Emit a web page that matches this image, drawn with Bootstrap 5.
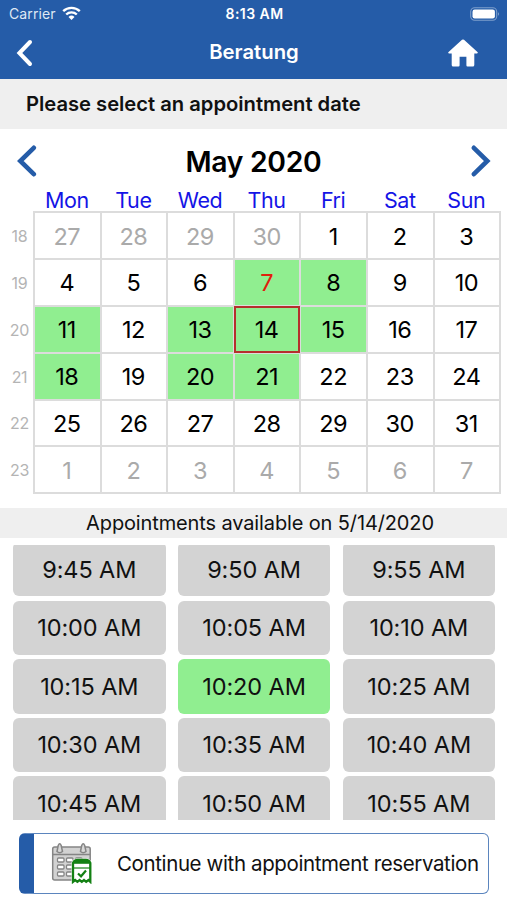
<!DOCTYPE html>
<html lang="en">
<head>
<meta charset="utf-8">
<meta name="viewport" content="width=device-width, initial-scale=1">
<title>Beratung</title>
<link rel="stylesheet" href="https://cdn.jsdelivr.net/npm/bootstrap@5.3.0/dist/css/bootstrap.min.css">
<style>
  :root { --brand: #255ca8; --free: #90ee90; --line: #dcdcdc; }
  body { font-family: Inter, "Liberation Sans", sans-serif; color: #111; background: #fff; width: 507px; height: 900px; overflow: hidden; }
  button { color: inherit; }
  .app-top { background: var(--brand); height: 79px; }
  .status-row { height: 27px; padding: 0 7px 0 9px; font-size: 14px; }
  .status-row > * { flex: 1 1 0; }
  .carrier { color: #dfe8f4; font-size: 14px; letter-spacing: .1px; }
  .wifi { margin-left: 6px; margin-top: -1px; }
  .clock { font-size: 14px; font-weight: 600; letter-spacing: .45px; }
  .title-row { height: 51px; padding: 0 28px 0 16px; }
  .title-row > * { flex: 0 0 auto; }
  .screen-title { font-size: 20.3px; font-weight: 600; padding-left: 28px; }
  .prompt { background: #efefef; height: 50px; padding-left: 26px; font-size: 20.2px; font-weight: 600; letter-spacing: -.01px; }
  .month-row { height: 59px; padding: 6px 16px 0; }
  .month-row svg { margin-top: -1px; }
  .month-name { font-size: 28.3px; font-weight: 600; letter-spacing: -.3px; color: #000; padding-top: 1px; }
  .calendar { width: 501px; display: grid; grid-template-columns: 34px repeat(7, 66.6px); grid-template-rows: 24.4px repeat(6, 46.8px); }
  .calendar > span { display: flex; align-items: center; justify-content: center; }
  .dow { color: #1414e6; font-size: 21.5px; letter-spacing: -.4px; padding-right: 1px; }
  .week { color: #b4b4b4; font-size: 16px; letter-spacing: -.3px; padding: 1px 0 0 5px; }
  .day { font-size: 23.5px; letter-spacing: -.5px; padding: 1px 1px 0 0; color: #000; box-shadow: inset 0 0 0 1px var(--line), 0 0 0 1px var(--line); }
  .day.other { color: #aaa; }
  .day.free { background: var(--free); }
  .day.today { color: #e0200c; }
  .day.picked { box-shadow: inset 0 0 0 2px #b5302c; position: relative; z-index: 1; }
  .slots-title { background: #efefef; height: 30px; margin-top: 14.8px; padding-left: 13px; font-size: 20px; letter-spacing: -.13px; }
  .slots { height: 275px; margin-top: 7px; padding: 0 12px 0 13px; overflow: hidden; }
  .slots-grid { display: grid; grid-template-columns: repeat(3, 152.5px); column-gap: 12.3px; row-gap: 4.1px; grid-auto-rows: 54.5px; margin-top: -3px; }
  .slot { background: #d3d3d3; border: 0; border-radius: 6px; font-size: 23.5px; letter-spacing: -.1px; padding: 0; white-space: nowrap; }
  .slot.picked { background: var(--free); }
  .go { width: 470px; height: 61px; margin: 13px 0 0 19px; background: #fff; border: 1.5px solid #5b85be; border-left: 15px solid var(--brand); border-radius: 6px; padding: 0 0 0 16px; gap: 25px; font-size: 20.5px; letter-spacing: -.38px; white-space: nowrap; }
  .go svg { margin-top: -1px; }
  .go-label { padding-top: 1px; }
</style>
<script src="https://cdn.jsdelivr.net/npm/bootstrap@5.3.0/dist/js/bootstrap.bundle.min.js"></script>
</head>
<body>
<header class="app-top text-white">
  <div class="status-row d-flex align-items-center">
    <div class="d-flex align-items-center">
      <span class="carrier">Carrier</span>
      <svg class="wifi" width="19" height="15" viewBox="0 0 19 15" fill="none" stroke="#fff" stroke-width="2.4"><path d="M1.2 5.2a12 12 0 0 1 16.6 0M4.2 8.5a7.6 7.6 0 0 1 10.6 0"/><path d="M9.5 14 6.5 11a4.3 4.3 0 0 1 6 0z" fill="#fff" stroke="none"/></svg>
    </div>
    <div class="clock text-center">8:13 AM</div>
    <div class="d-flex justify-content-end">
      <svg width="30" height="14" viewBox="0 0 30 14"><rect x=".7" y=".7" width="26" height="12.6" rx="4" fill="none" stroke="#7d9ecb" stroke-width="1.1"/><rect x="2.5" y="2.5" width="22.4" height="9" rx="2.2" fill="#fff"/><path d="M28 5q1.7 2 0 4z" fill="#9db6d8"/></svg>
    </div>
  </div>
  <div class="title-row d-flex align-items-center justify-content-between">
    <svg width="17" height="28" viewBox="0 0 17 28" fill="none" stroke="#fff" stroke-width="4" stroke-linecap="round"><path d="M14 3 3.4 14 14 25"/></svg>
    <span class="screen-title">Beratung</span>
    <svg width="32" height="28" viewBox="0 0 32 28" fill="#fff"><path d="M15 .8Q16 0 17 .8L30.7 13.3Q31.2 14.4 30 14.5H27.3V26Q27.3 27.5 25.8 27.5H20.5Q19.4 27.5 19.4 26.3V17.7H12.6V26.3Q12.6 27.5 11.5 27.5H6.2Q4.7 27.5 4.7 26V14.5H2Q.8 14.4 1.3 13.3Z"/></svg>
  </div>
</header>
<div class="prompt d-flex align-items-center">Please select an appointment date</div>
<div class="month-row d-flex align-items-center justify-content-between">
  <svg width="21" height="34" viewBox="0 0 21 34" fill="none" stroke="#255ca8" stroke-width="4.6" stroke-linecap="round"><path d="M17.8 3.8 4.3 17 17.8 30.2"/></svg>
  <span class="month-name">May 2020</span>
  <svg width="21" height="34" viewBox="0 0 21 34" fill="none" stroke="#255ca8" stroke-width="4.6" stroke-linecap="round"><path d="M3.8 3.8 17.3 17 3.8 30.2"/></svg>
</div>
<main>
  <div class="calendar">
    <span></span><span class="dow">Mon</span><span class="dow">Tue</span><span class="dow">Wed</span><span class="dow">Thu</span><span class="dow">Fri</span><span class="dow">Sat</span><span class="dow">Sun</span>
    <span class="week">18</span><span class="day other">27</span><span class="day other">28</span><span class="day other">29</span><span class="day other">30</span><span class="day">1</span><span class="day">2</span><span class="day">3</span>
    <span class="week">19</span><span class="day">4</span><span class="day">5</span><span class="day">6</span><span class="day free today">7</span><span class="day free">8</span><span class="day">9</span><span class="day">10</span>
    <span class="week">20</span><span class="day free">11</span><span class="day">12</span><span class="day free">13</span><span class="day free picked">14</span><span class="day free">15</span><span class="day">16</span><span class="day">17</span>
    <span class="week">21</span><span class="day free">18</span><span class="day">19</span><span class="day free">20</span><span class="day free">21</span><span class="day">22</span><span class="day">23</span><span class="day">24</span>
    <span class="week">22</span><span class="day">25</span><span class="day">26</span><span class="day">27</span><span class="day">28</span><span class="day">29</span><span class="day">30</span><span class="day">31</span>
    <span class="week">23</span><span class="day other">1</span><span class="day other">2</span><span class="day other">3</span><span class="day other">4</span><span class="day other">5</span><span class="day other">6</span><span class="day other">7</span>
  </div>
  <div class="slots-title d-flex align-items-center justify-content-center">Appointments available on 5/14/2020</div>
  <div class="slots">
    <div class="slots-grid">
      <button class="slot">9:45 AM</button><button class="slot">9:50 AM</button><button class="slot">9:55 AM</button>
      <button class="slot">10:00 AM</button><button class="slot">10:05 AM</button><button class="slot">10:10 AM</button>
      <button class="slot">10:15 AM</button><button class="slot picked">10:20 AM</button><button class="slot">10:25 AM</button>
      <button class="slot">10:30 AM</button><button class="slot">10:35 AM</button><button class="slot">10:40 AM</button>
      <button class="slot">10:45 AM</button><button class="slot">10:50 AM</button><button class="slot">10:55 AM</button>
    </div>
  </div>
  <button class="go d-flex align-items-center">
    <svg class="flex-shrink-0" width="42" height="42" viewBox="0 0 42 42">
      <rect x="2.7" y="5" width="37.5" height="33" rx="2" fill="#d2d2d2" stroke="#858585" stroke-width="1.5"/>
      <path d="M3 12.5H40" stroke="#858585" stroke-width="1.4"/>
      <g fill="#d8d8d8" stroke="#858585" stroke-width="1.5"><path d="M7 9.5 8.2 3.5Q9.7 0 11.2 3.5L12.5 9.5Q9.7 12 7 9.5zM30.5 9.5 31.7 3.5Q33.2 0 34.7 3.5L36 9.5Q33.2 12 30.5 9.5z"/></g>
      <g fill="#fff" stroke="#858585" stroke-width="1.3"><rect x="7.5" y="16" width="6.5" height="4" rx="1"/><rect x="16.5" y="16" width="6.5" height="4" rx="1"/><rect x="25.5" y="16" width="6.5" height="4" rx="1"/><rect x="7.5" y="23" width="6.5" height="4" rx="1"/><rect x="16.5" y="23" width="6.5" height="4" rx="1"/><rect x="7.5" y="30" width="6.5" height="4" rx="1"/><rect x="16.5" y="30" width="6.5" height="4" rx="1"/></g>
      <path d="M21.5 41V20Q23 16.500 27 16.500H37Q40.500 17 41.800 20V41z" fill="#fff"/>
      <path d="M23 21Q24.500 18 27.500 18H36Q39 18 40.300 21V39.800l-1.900-1.800-2.200 1.800-2.200-1.800-2.200 1.800-2.200-1.800-2.200 1.800-2.200-1.800L23 39.800z" fill="#fff" stroke="#138013" stroke-width="2.3"/>
      <path d="M24 20H39.5" stroke="#138013" stroke-width="3.6"/><path d="M24 26H40" stroke="#138013" stroke-width="1.2"/>
      <path d="M28 31.5 31 34.3 36 28.5" fill="none" stroke="#138013" stroke-width="2.2"/>
    </svg>
    <span class="go-label">Continue with appointment reservation</span>
  </button>
</main>
</body>
</html>
